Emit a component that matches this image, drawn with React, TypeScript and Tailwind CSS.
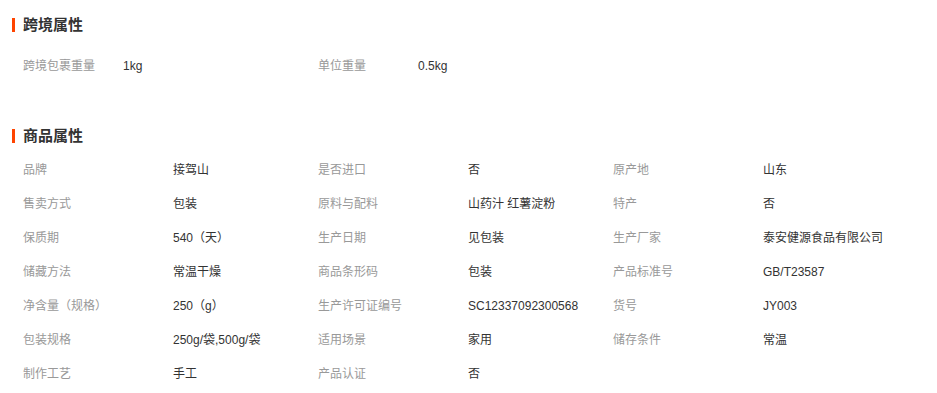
const crossBorder = [
    { label: "跨境包裹重量", value: "1kg" },
    { label: "单位重量", value: "0.5kg" },
]

const productAttrs = [
    { label: "品牌", value: "接驾山" },
    { label: "是否进口", value: "否" },
    { label: "原产地", value: "山东" },
    { label: "售卖方式", value: "包装" },
    { label: "原料与配料", value: "山药汁 红薯淀粉" },
    { label: "特产", value: "否" },
    { label: "保质期", value: "540（天）" },
    { label: "生产日期", value: "见包装" },
    { label: "生产厂家", value: "泰安健源食品有限公司" },
    { label: "储藏方法", value: "常温干燥" },
    { label: "商品条形码", value: "包装" },
    { label: "产品标准号", value: "GB/T23587" },
    { label: "净含量（规格）", value: "250（g）" },
    { label: "生产许可证编号", value: "SC12337092300568" },
    { label: "货号", value: "JY003" },
    { label: "包装规格", value: "250g/袋,500g/袋" },
    { label: "适用场景", value: "家用" },
    { label: "储存条件", value: "常温" },
    { label: "制作工艺", value: "手工" },
    { label: "产品认证", value: "否" },
]

function Heading({ title }: { title: string }) {
    return (
        <div className="flex items-center h-[20px]">
            <span className="w-[3px] h-[14px] bg-[#ff4400] mr-[8px]" />
            <h2 className="text-[15px] font-bold text-[#333333] leading-[20px]">{title}</h2>
        </div>
    )
}

export default function App() {
    return (
        <div
            className="w-[937px] h-[393px] bg-white pl-[12px] overflow-hidden"
            style={{ fontFamily: '"Liberation Sans", "Noto Sans CJK SC", sans-serif' }}
        >
            <div className="pt-[15px]">
                <Heading title="跨境属性" />
            </div>
            <div className="mt-[14px] pl-[11px] grid grid-cols-[295px_295px]">
                {crossBorder.map((item) => (
                    <div key={item.label} className="flex items-center h-[34px] text-[12px]">
                        <span className="w-[100px] text-[#999999]">{item.label}</span>
                        <span className="text-[#333333]">{item.value}</span>
                    </div>
                ))}
            </div>

            <div className="mt-[43px]">
                <Heading title="商品属性" />
            </div>
            <div className="mt-[7px] pl-[11px] grid grid-cols-[295px_295px_295px]">
                {productAttrs.map((item) => (
                    <div key={item.label} className="flex items-center h-[34px] text-[12px]">
                        <span className="w-[150px] text-[#999999]">{item.label}</span>
                        <span className="text-[#333333]">{item.value}</span>
                    </div>
                ))}
            </div>
        </div>
    )
}
